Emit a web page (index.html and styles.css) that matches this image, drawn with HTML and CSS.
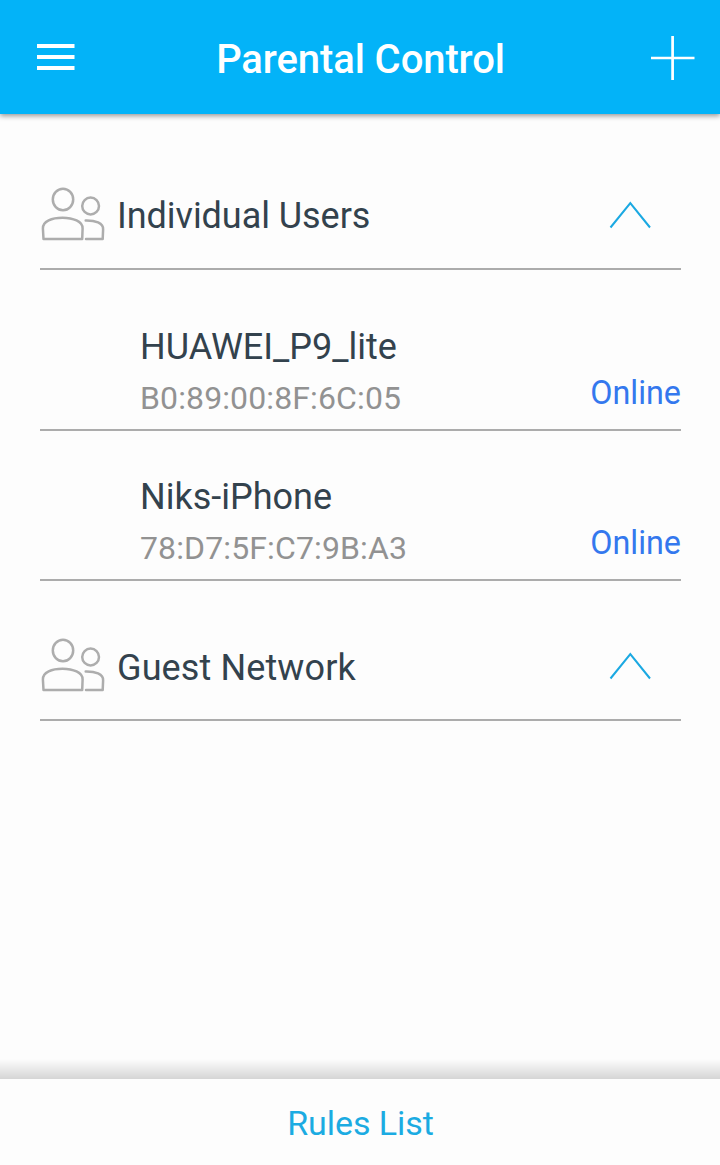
FILE: index.html
```
<!DOCTYPE html>
<html lang="en">
<head>
  <meta charset="UTF-8">
  <meta name="viewport" content="width=device-width, initial-scale=1.0">
  <title>Parental Control</title>
  <link rel="stylesheet" href="styles.css">
</head>
<body>
  <header class="topbar">
    <svg class="menu" width="38" height="26" viewBox="0 0 38 26">
      <path d="M0 2h37.500M0 13h37.500M0 24h37.500" stroke="#fff" stroke-width="4"/>
    </svg>
    <h1>Parental Control</h1>
    <svg class="add" width="44" height="44" viewBox="0 0 44 44">
      <path d="M0 22h43.500M21.600 0v44" stroke="#fff" stroke-width="2.700"/>
    </svg>
  </header>

  <main class="list">
    <div class="group">
      <svg class="users" width="66" height="58" viewBox="0 0 66 58">
        <ellipse cx="23" cy="13.5" rx="10.2" ry="10.7"/>
        <circle cx="50.6" cy="20" r="8.4"/>
        <path d="M3.5 53L2.9 42.5C2.6 35 12 31.7 22.5 31.7S42.8 35.500 42.600 42.500L42.200 53Z"/>
        <path d="M45.700 34.400C55 34.200 63.600 37 63.100 43.500L62.700 53H46"/>
      </svg>
      <span class="group-name">Individual Users</span>
      <svg class="arrow" width="42" height="30" viewBox="0 0 42 30">
        <path d="M1.500 27.500L21.300 3L41 27.500"/>
      </svg>
    </div>

    <div class="device first">
      <div class="info">
        <div class="name">HUAWEI_P9_lite</div>
        <div class="mac">B0:89:00:8F:6C:05</div>
      </div>
      <span class="status">Online</span>
    </div>
    <div class="device">
      <div class="info">
        <div class="name">Niks-iPhone</div>
        <div class="mac">78:D7:5F:C7:9B:A3</div>
      </div>
      <span class="status">Online</span>
    </div>

    <div class="group guest">
      <svg class="users" width="66" height="58" viewBox="0 0 66 58">
        <ellipse cx="23" cy="13.5" rx="10.2" ry="10.7"/>
        <circle cx="50.6" cy="20" r="8.4"/>
        <path d="M3.5 53L2.9 42.5C2.6 35 12 31.7 22.5 31.7S42.8 35.500 42.600 42.500L42.200 53Z"/>
        <path d="M45.700 34.400C55 34.200 63.600 37 63.100 43.500L62.700 53H46"/>
      </svg>
      <span class="group-name">Guest Network</span>
      <svg class="arrow" width="42" height="30" viewBox="0 0 42 30">
        <path d="M1.500 27.500L21.300 3L41 27.500"/>
      </svg>
    </div>
  </main>

  <div class="footer-shadow"></div>
  <footer class="footer">Rules List</footer>
</body>
</html>
```

FILE: styles.css
```
* { box-sizing: border-box; }
body { margin: 0; height: 1165px; display: flex; flex-direction: column; background: #fdfdfd; font-family: Roboto, sans-serif; color: #33424d; }
svg { display: block; flex: none; }

.topbar { height: 114px; flex: none; padding: 2px 25px 0 37px; display: flex; align-items: center; justify-content: space-between; background: #03b3f8; box-shadow: 0 2px 5px rgba(0,0,0,0.4); }
.topbar h1 { margin: 4px 5px 0 0; color: #fff; font-size: 40px; font-weight: 500; line-height: 48px; letter-spacing: -0.1px; }
.menu { margin-top: -2px; }

.list { flex: 1; padding: 48px 39px 0 40px; }
.group { height: 108px; display: flex; align-items: center; border-bottom: 2px solid #acacac; }
.group-name { flex: 1; margin: 2px 0 0 11px; font-size: 36px; line-height: 42px; letter-spacing: -0.05px; }
.guest { margin-top: 32px; }
.guest .group-name { margin-top: 4px; letter-spacing: 0.12px; }
.users { fill: none; stroke: #adadad; stroke-width: 2.5; stroke-linejoin: round; stroke-linecap: round; }
.arrow { margin-right: 30px; fill: none; stroke: #1ba9e2; stroke-width: 2; }

.device { height: 150px; padding: 0 0 12px 100px; display: flex; align-items: flex-end; justify-content: space-between; border-bottom: 2px solid #acacac; }
.first { margin-top: 11px; }
.name { font-size: 36px; line-height: 42px; }
.mac { margin-top: 11px; color: #929292; font-size: 32px; line-height: 38px; letter-spacing: 0.12px; }
.status { margin-bottom: 5px; color: #3478ee; font-size: 32.3px; line-height: 38px; }

.footer-shadow { height: 20px; flex: none; background: linear-gradient(#fdfdfd, #d5d5d5); }
.footer { height: 86px; flex: none; padding: 2px 0 0 1px; display: flex; align-items: center; justify-content: center; color: #1babe2; font-size: 34px; letter-spacing: -0.05px; }
```
